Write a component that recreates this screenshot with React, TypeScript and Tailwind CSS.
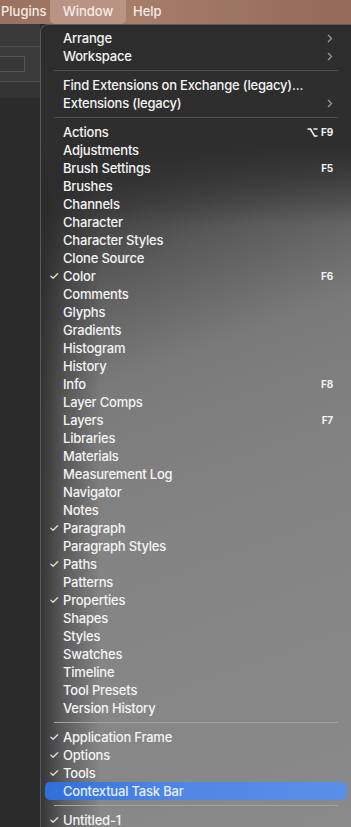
import React from "react";

type Row =
  | { kind: "item"; label: string; checked?: boolean; shortcut?: string; submenu?: boolean; active?: boolean }
  | { kind: "sep" };

const item = (label: string, extra: Partial<Omit<Extract<Row, { kind: "item" }>, "kind" | "label">> = {}): Row => ({
  kind: "item",
  label,
  ...extra,
});
const sep: Row = { kind: "sep" };

const rows: Row[] = [
  item("Arrange", { submenu: true }),
  item("Workspace", { submenu: true }),
  sep,
  item("Find Extensions on Exchange (legacy)..."),
  item("Extensions (legacy)", { submenu: true }),
  sep,
  item("Actions", { shortcut: "⌥F9" }),
  item("Adjustments"),
  item("Brush Settings", { shortcut: "F5" }),
  item("Brushes"),
  item("Channels"),
  item("Character"),
  item("Character Styles"),
  item("Clone Source"),
  item("Color", { checked: true, shortcut: "F6" }),
  item("Comments"),
  item("Glyphs"),
  item("Gradients"),
  item("Histogram"),
  item("History"),
  item("Info", { shortcut: "F8" }),
  item("Layer Comps"),
  item("Layers", { shortcut: "F7" }),
  item("Libraries"),
  item("Materials"),
  item("Measurement Log"),
  item("Navigator"),
  item("Notes"),
  item("Paragraph", { checked: true }),
  item("Paragraph Styles"),
  item("Paths", { checked: true }),
  item("Patterns"),
  item("Properties", { checked: true }),
  item("Shapes"),
  item("Styles"),
  item("Swatches"),
  item("Timeline"),
  item("Tool Presets"),
  item("Version History"),
  sep,
  item("Application Frame", { checked: true }),
  item("Options", { checked: true }),
  item("Tools", { checked: true }),
  item("Contextual Task Bar", { active: true }),
  sep,
  item("Untitled-1", { checked: true }),
];

function Shortcut({ text }: { text: string }) {
  if (text.startsWith("⌥")) {
    return (
      <span className="flex items-center gap-[3px] text-[10px] font-bold text-[#f2f2f2]">
        <svg width="11" height="9" viewBox="0 0 11 9" fill="none" stroke="#f2f2f2" strokeWidth="1.6">
          <path d="M0.5 1h3l4 7h3" />
          <path d="M6.5 1h4" />
        </svg>
        {text.slice(1)}
      </span>
    );
  }
  return <span className="text-[10px] font-bold text-[#f2f2f2]">{text}</span>;
}

export default function App() {
  return (
    <div className="w-[351px] h-[827px] overflow-hidden bg-[#2b2b2b] font-['Inter','Liberation_Sans',sans-serif] text-[13px]">
      {/* menu bar */}
      <div className="h-[24px] flex items-center bg-[linear-gradient(90deg,#98725f,#a57d69_40%,#93695a_100%)] text-[#f6ebe5]">
        <span className="w-[50px] pl-[1px] font-medium">Plugins</span>
        <span className="w-[76px] h-[24px] flex items-center justify-center rounded-b-[5px] bg-[#b99484] font-medium">
          Window
        </span>
        <span className="ml-[7px] font-medium">Help</span>
      </div>

      <div className="flex">
        {/* window behind */}
        <div className="w-[40px] shrink-0 flex flex-col">
          <div className="h-[23px] bg-[#3a3a3a] border-b border-[#505050]" />
          <div className="h-[35px] bg-[#3b3b3b] border-b border-[#4d4d4d] flex items-center">
            <div className="w-[25px] h-[16px] border border-[#555] border-l-0 bg-[#383838]" />
          </div>
          <div className="h-[16px] bg-[#343434]" />
          <div className="flex-1 bg-[#2b2b2b]" />
        </div>

        {/* dropdown */}
        <div className="relative w-[313px] h-[803px] rounded-tl-[8px] border-l border-t border-[#5a5a5a] bg-[linear-gradient(160deg,#2e2e2e_0%,#2f2f2f_18%,#5a5a5a_30%,#7a7a7a_42%,#838383_60%,#8a8a8a_100%)] overflow-hidden">
          <div className="absolute inset-0 bg-[linear-gradient(90deg,rgba(40,40,40,0.85)_0px,rgba(40,40,40,0.45)_22px,rgba(40,40,40,0)_60px)] pointer-events-none" />
          <div className="absolute inset-x-0 top-0 h-[200px] bg-[linear-gradient(180deg,#2d2d2d_0%,#2e2e2e_60%,rgba(46,46,46,0)_100%)] pointer-events-none" />
          <div className="relative pt-[4px] pl-[4px] pr-[4px] tracking-[-0.2px]">
            {rows.map((r, i) =>
              r.kind === "sep" ? (
                <div key={i} className="h-[11px] flex items-center pl-[9px] pr-[9px]">
                  <div className={`h-px w-full ${i < 10 ? "bg-[#4e4e4e]" : "bg-[#a3a3a3]"}`} />
                </div>
              ) : (
                <div
                  key={i}
                  className={`h-[18px] flex items-center rounded-[5px] pr-[14px] ${
                    r.active ? "bg-[linear-gradient(90deg,#2f6fd9,#4f86e5_40%,#5a8fe8)] text-[#e6edf9]" : "text-[#f4f4f4]"
                  }`}
                >
                  <span className="w-[18px] shrink-0 text-center text-[12px] leading-none">{r.checked ? "✓" : ""}</span>
                  <span className="flex-1 font-medium leading-[18px] whitespace-nowrap">{r.label}</span>
                  {r.shortcut && <Shortcut text={r.shortcut} />}
                  {r.submenu && (
                    <svg width="6" height="9" viewBox="0 0 6 9" fill="none" stroke="#9a9a9a" strokeWidth="1.3">
                      <path d="M1 1l3.5 3.5L1 8" />
                    </svg>
                  )}
                </div>
              )
            )}
          </div>
        </div>
      </div>
    </div>
  );
}
